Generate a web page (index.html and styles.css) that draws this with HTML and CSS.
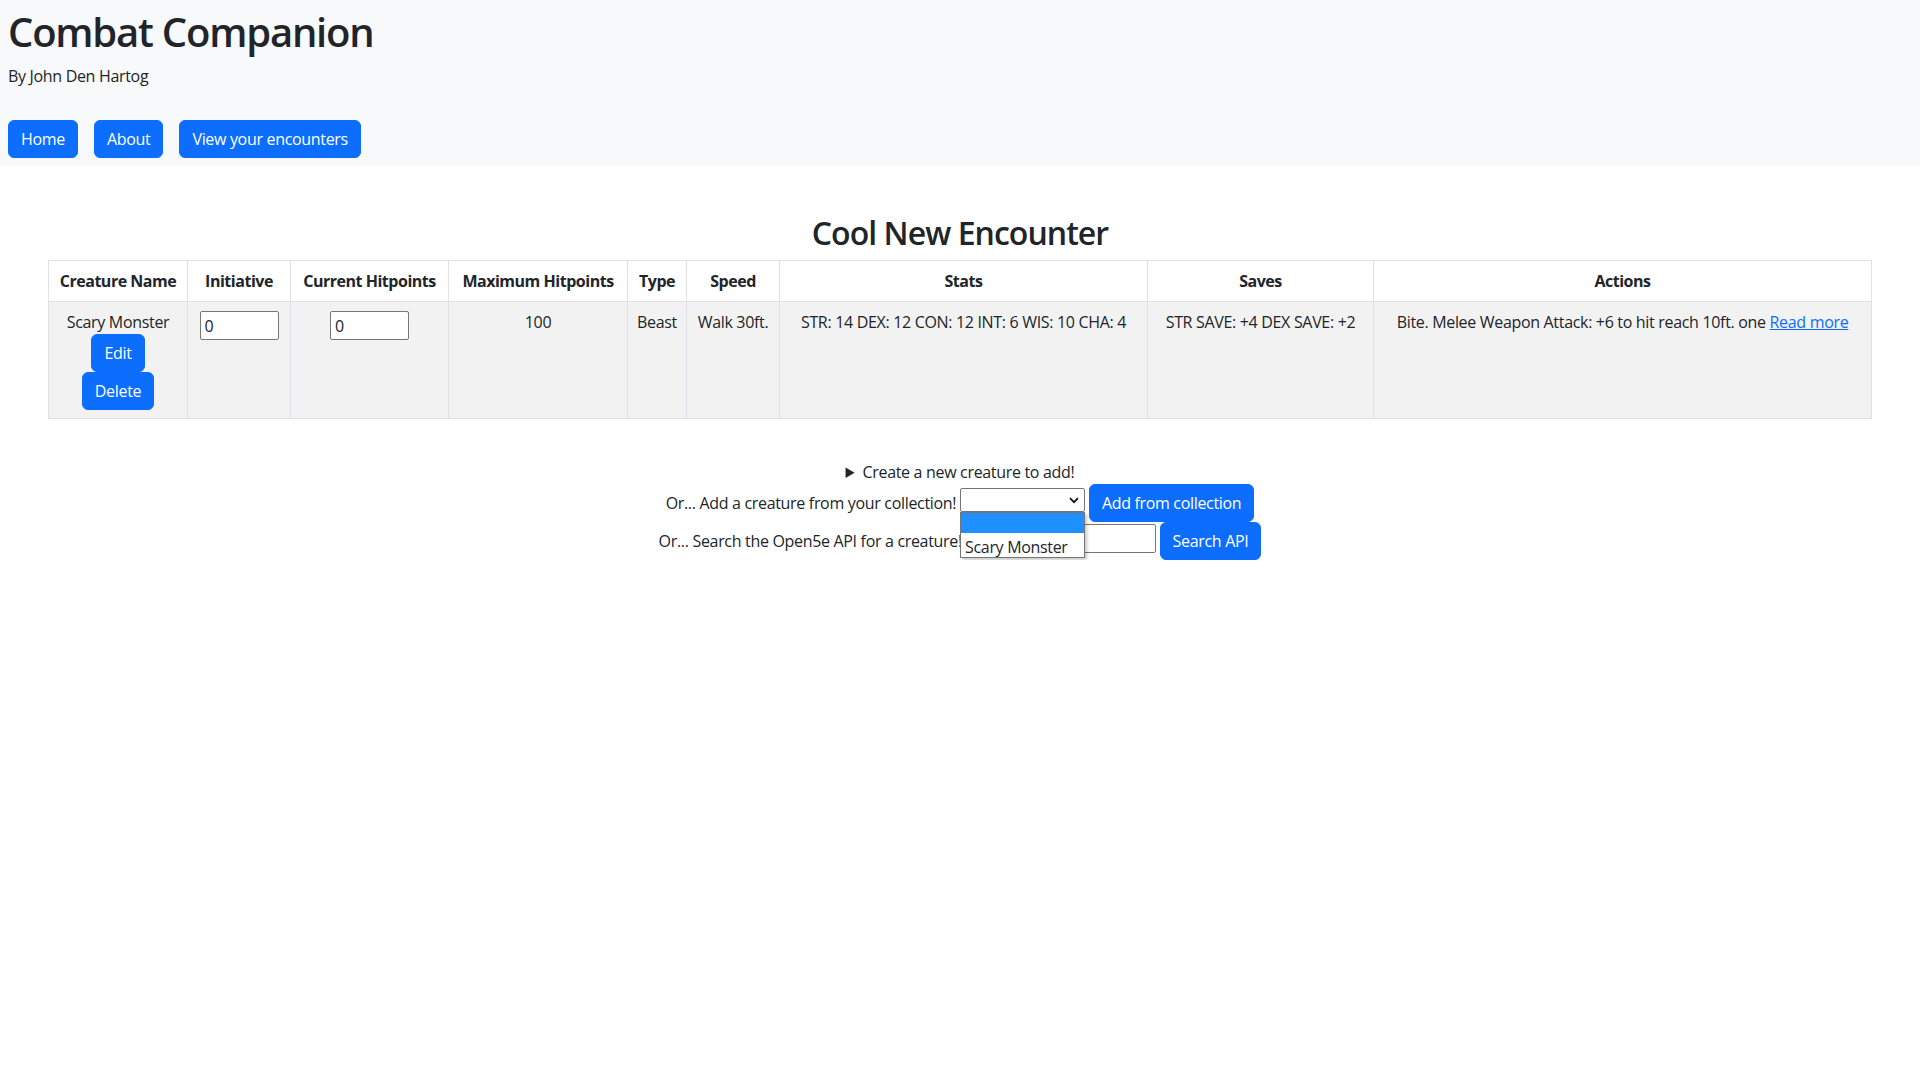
FILE: index.html
```html
<!DOCTYPE html>
<html lang="en">
<head>
<meta charset="utf-8">
<title>Combat Companion</title>
<link rel="stylesheet" href="styles.css">
</head>
<body>
<header class="site-header">
  <h1 class="site-title">Combat Companion</h1>
  <p class="byline">By John Den Hartog</p>
  <nav class="nav">
    <a class="btn" href="#">Home</a>
    <a class="btn" href="#">About</a>
    <a class="btn" href="#">View your encounters</a>
  </nav>
</header>
<main class="encounter">
  <h2 class="encounter-title">Cool New Encounter</h2>
  <table class="creature-table">
    <colgroup>
      <col class="c-name"><col class="c-init"><col class="c-cur"><col class="c-max"><col class="c-type"><col class="c-speed"><col class="c-stats"><col class="c-saves"><col class="c-actions">
    </colgroup>
    <thead>
      <tr>
        <th>Creature Name</th>
        <th>Initiative</th>
        <th>Current Hitpoints</th>
        <th>Maximum Hitpoints</th>
        <th>Type</th>
        <th>Speed</th>
        <th>Stats</th>
        <th>Saves</th>
        <th>Actions</th>
      </tr>
    </thead>
    <tbody>
      <tr>
        <td>Scary Monster<br><button class="btn">Edit</button><br><button class="btn">Delete</button></td>
        <td><input class="num-input" type="text" value="0"></td>
        <td><input class="num-input" type="text" value="0"></td>
        <td>100</td>
        <td>Beast</td>
        <td>Walk 30ft.</td>
        <td>STR: 14 DEX: 12 CON: 12 INT: 6 WIS: 10 CHA: 4</td>
        <td>STR SAVE: +4 DEX SAVE: +2</td>
        <td>Bite. Melee Weapon Attack: +6 to hit reach 10ft. one <a class="link" href="#">Read more</a></td>
      </tr>
    </tbody>
  </table>
  <div class="add-section">
    <details class="create"><summary>Create a new creature to add!</summary></details>
    <div class="add-row">Or... Add a creature from your collection! <span class="select-wrap"><span class="fake-select"><svg class="chev" width="10" height="7" viewBox="0 0 10 7"><path d="M1 1.2 L5 5.2 L9 1.2" fill="none" stroke="#111" stroke-width="1.8"/></svg></span><span class="dropdown"><span class="opt opt-active"></span><span class="opt opt-item">Scary Monster</span></span></span> <button class="btn">Add from collection</button></div>
    <div class="add-row">Or... Search the Open5e API for a creature! <input class="search-input" type="text"> <button class="btn">Search API</button></div>
  </div>
</main>
</body>
</html>
```
FILE: styles.css
```css
html, body {
  margin: 0;
  padding: 0;
}
body {
  font-family: "Open Sans", "Liberation Sans", sans-serif;
  font-size: 16px;
  line-height: 1.5;
  letter-spacing: -0.02em;
  color: #212529;
  background: #fff;
}
.site-header {
  background: #f8f9fa;
  padding: 8px;
}
.site-title {
  margin: 0 0 8px;
  font-size: 40px;
  font-weight: 600;
  line-height: 1.2;
  letter-spacing: -0.03em;
}
.byline {
  margin: 0 0 32px;
}
.nav {
  display: flex;
  gap: 16px;
}
.btn {
  display: inline-block;
  font-family: inherit;
  font-size: 16px;
  line-height: 24px;
  letter-spacing: -0.02em;
  padding: 6px 12px;
  border: 1px solid #0d6efd;
  border-radius: 6px;
  background: #0d6efd;
  color: #fff;
  text-decoration: none;
  cursor: pointer;
  vertical-align: baseline;
}
.encounter {
  width: 95%;
  margin: 0 auto;
}
.encounter-title {
  margin: 48px 0 8px;
  font-size: 32px;
  font-weight: 600;
  line-height: 1.2;
  letter-spacing: -0.03em;
  text-align: center;
}
.creature-table {
  width: 100%;
  border-collapse: collapse;
  table-layout: fixed;
  text-align: center;
  margin-bottom: 41px;
}
.c-name { width: 139px; }
.c-init { width: 103px; }
.c-cur { width: 158px; }
.c-max { width: 179px; }
.c-type { width: 59px; }
.c-speed { width: 93px; }
.c-stats { width: 368px; }
.c-saves { width: 226px; }
.creature-table th,
.creature-table td {
  border: 1px solid #dee2e6;
  padding: 8px;
  vertical-align: top;
}
.creature-table th {
  font-weight: 700;
  letter-spacing: -0.03em;
  white-space: nowrap;
  background: #fff;
}
.creature-table tbody td {
  background: #f2f2f2;
}
.num-input {
  box-sizing: border-box;
  width: 79px;
  height: 29px;
  margin-top: 1px;
  padding: 1px 4px;
  border: 1px solid #767676;
  border-radius: 2px;
  font-family: inherit;
  font-size: 16px;
  color: #212529;
  background: #fff;
  vertical-align: top;
}
.link {
  color: #0d6efd;
  text-decoration: underline;
}
.add-section {
  text-align: center;
}
.create summary {
  cursor: pointer;
}
.add-row {
  line-height: 24px;
}
.select-wrap {
  position: relative;
  display: inline-block;
  vertical-align: top;
  margin-top: 4px;
  line-height: 24px;
}
.fake-select {
  box-sizing: border-box;
  display: flex;
  justify-content: flex-end;
  align-items: center;
  width: 125px;
  height: 24px;
  padding-right: 5px;
  border: 1px solid #767676;
  border-radius: 2px;
  background: #fff;
}
.dropdown {
  position: absolute;
  top: 24px;
  left: 0;
  box-sizing: border-box;
  width: 125px;
  display: flex;
  flex-direction: column;
  background: #fff;
  border: 1px solid #767676;
  box-shadow: 2px 2px 3px rgba(0, 0, 0, 0.22);
  text-align: left;
  z-index: 2;
}
.opt {
  display: block;
  height: 20px;
  padding: 0 4px;
  font-size: 16px;
  white-space: nowrap;
}
.opt-item {
  height: 22px;
  padding-top: 2px;
  line-height: 24px;
}
.opt-active {
  background: #1e90ff;
}
.search-input {
  box-sizing: border-box;
  width: 190px;
  height: 29px;
  margin-top: 2px;
  padding: 1px 4px;
  border: 1px solid #767676;
  border-radius: 2px;
  font-family: inherit;
  font-size: 16px;
  background: #fff;
  vertical-align: top;
}
```
